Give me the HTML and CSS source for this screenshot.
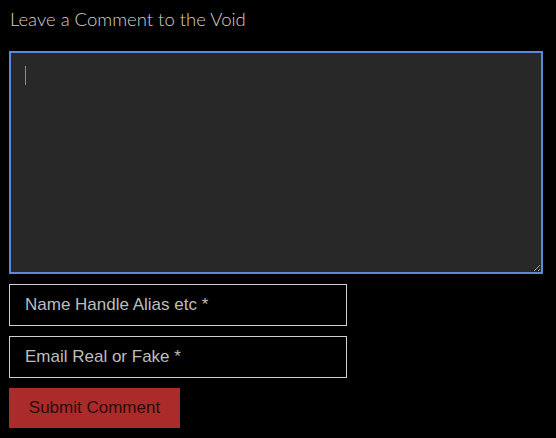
FILE: index.html
```html
<!DOCTYPE html>
<html lang="en">
<head>
    <meta charset="UTF-8">
    <meta name="viewport" content="width=device-width, initial-scale=1.0">
    <title>Leave a Comment</title>
    <link rel="stylesheet" href="styles.css">
</head>
<body>
    <div class="comment-form">
        <h3 class="comment-form__title">Leave a Comment to the Void</h3>
        <form>
            <div class="comment-form__box">
                <textarea class="comment-form__text"></textarea>
                <span class="comment-form__caret"></span>
            </div>
            <input class="comment-form__field" type="text" placeholder="Name Handle Alias etc *">
            <input class="comment-form__field" type="email" placeholder="Email Real or Fake *">
            <button class="comment-form__btn" type="button">Submit Comment</button>
        </form>
    </div>
</body>
</html>
```

FILE: styles.css
```css
* {
   padding: 0;
   margin: 0;
   box-sizing: border-box;
}

body {
   background-color: #000000;
   font-family: "Liberation Sans", Arial, sans-serif;
}

.comment-form {
   padding: 7px 9px;
}

.comment-form__title {
   font-family: "Lato", sans-serif;
   font-weight: 300;
   font-size: 18.5px;
   line-height: 24px;
   color: #d8d0c8;
   margin-left: 1px;
   margin-bottom: 20px;
}

form {
   display: flex;
   flex-direction: column;
   align-items: flex-start;
   gap: 10px;
}

.comment-form__box {
   position: relative;
   display: flex;
}

.comment-form__text {
   width: 534px;
   height: 223px;
   background-color: #282828;
   border: 2px solid #5b8bd8;
   outline: none;
   padding: 14px 14px;
   color: #cccccc;
   font-family: "Liberation Sans", Arial, sans-serif;
   font-size: 17px;
}

/* text cursor in the focused box */
.comment-form__caret {
   position: absolute;
   left: 16px;
   top: 15px;
   width: 1px;
   height: 19px;
   background-color: #8a8a8a;
}

.comment-form__field {
   width: 338px;
   height: 42px;
   background-color: #000000;
   border: 1px solid #cfcfcf;
   padding: 0 15px;
   color: #cccccc;
   font-family: "Liberation Sans", Arial, sans-serif;
   font-size: 17px;
   outline: none;
}

.comment-form__field::placeholder {
   color: #bdbdbd;
}

.comment-form__btn {
   width: 171px;
   height: 40px;
   background-color: #ab2a2a;
   border: none;
   color: #2a0c0c;
   font-family: "Liberation Sans", Arial, sans-serif;
   font-size: 17px;
   cursor: pointer;
}
```
